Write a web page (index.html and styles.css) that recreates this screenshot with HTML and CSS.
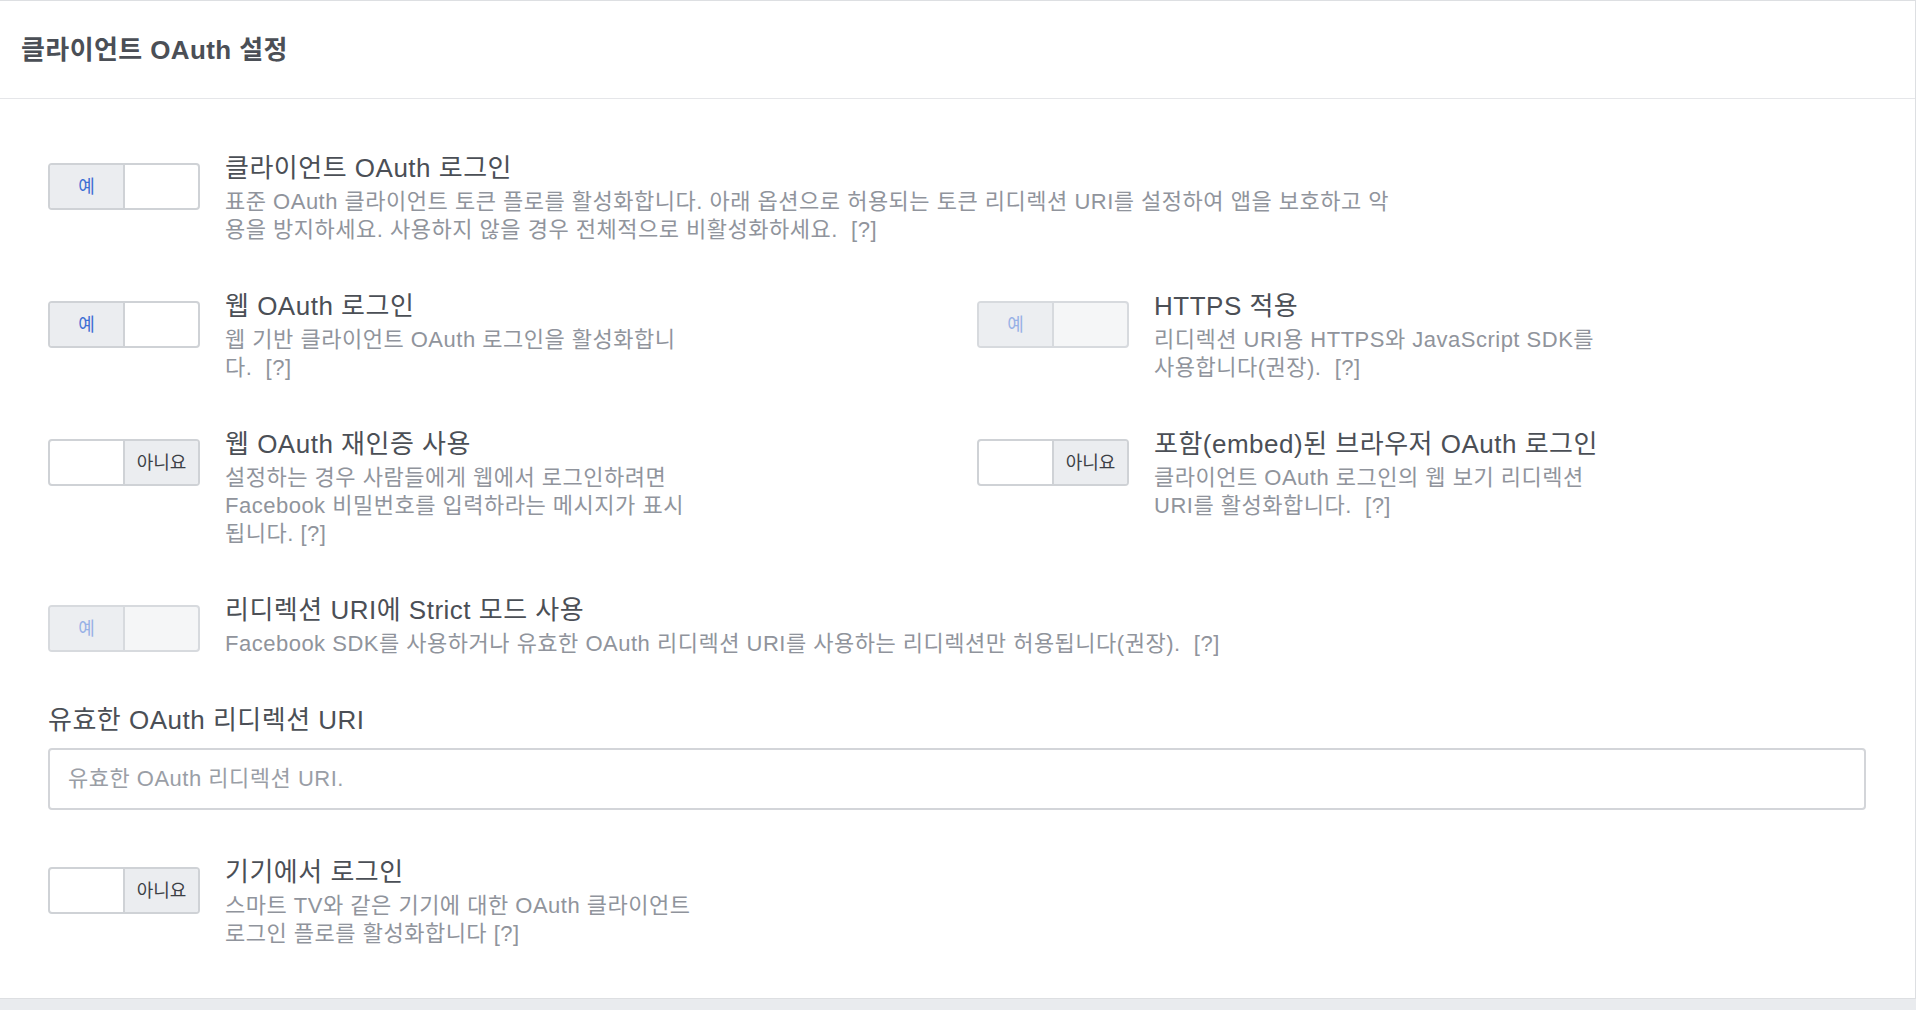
FILE: index.html
```html
<!DOCTYPE html>
<html lang="ko">
<head>
<meta charset="utf-8">
<title>클라이언트 OAuth 설정</title>
<link rel="stylesheet" href="styles.css">
</head>
<body>
<section class="card">
  <header class="card-header">
    <h2>클라이언트 OAuth 설정</h2>
  </header>
  <div class="card-body">
    <div class="setting">
      <div class="toggle">
        <span class="seg active yes">예</span><span class="seg"></span>
      </div>
      <div class="setting-text">
        <div class="setting-title">클라이언트 OAuth 로그인</div>
        <div class="setting-desc wide">표준 OAuth 클라이언트 토큰 플로를 활성화합니다. 아래 옵션으로 허용되는 토큰 리디렉션 URI를 설정하여 앱을 보호하고 악<br>용을 방지하세요. 사용하지 않을 경우 전체적으로 비활성화하세요.&nbsp; [?]</div>
      </div>
    </div>

    <div class="setting-grid">
      <div class="setting">
        <div class="toggle">
          <span class="seg active yes">예</span><span class="seg"></span>
        </div>
        <div class="setting-text">
          <div class="setting-title">웹 OAuth 로그인</div>
          <div class="setting-desc">웹 기반 클라이언트 OAuth 로그인을 활성화합니<br>다.&nbsp; [?]</div>
        </div>
      </div>
      <div class="setting">
        <div class="toggle disabled">
          <span class="seg active yes">예</span><span class="seg"></span>
        </div>
        <div class="setting-text">
          <div class="setting-title">HTTPS 적용</div>
          <div class="setting-desc">리디렉션 URI용 HTTPS와 JavaScript SDK를<br>사용합니다(권장).&nbsp; [?]</div>
        </div>
      </div>
      <div class="setting">
        <div class="toggle">
          <span class="seg"></span><span class="seg active no">아니요</span>
        </div>
        <div class="setting-text">
          <div class="setting-title">웹 OAuth 재인증 사용</div>
          <div class="setting-desc">설정하는 경우 사람들에게 웹에서 로그인하려면<br>Facebook 비밀번호를 입력하라는 메시지가 표시<br>됩니다. [?]</div>
        </div>
      </div>
      <div class="setting">
        <div class="toggle">
          <span class="seg"></span><span class="seg active no">아니요</span>
        </div>
        <div class="setting-text">
          <div class="setting-title">포함(embed)된 브라우저 OAuth 로그인</div>
          <div class="setting-desc">클라이언트 OAuth 로그인의 웹 보기 리디렉션<br>URI를 활성화합니다.&nbsp; [?]</div>
        </div>
      </div>
    </div>

    <div class="setting">
      <div class="toggle disabled">
        <span class="seg active yes">예</span><span class="seg"></span>
      </div>
      <div class="setting-text">
        <div class="setting-title">리디렉션 URI에 Strict 모드 사용</div>
        <div class="setting-desc wide">Facebook SDK를 사용하거나 유효한 OAuth 리디렉션 URI를 사용하는 리디렉션만 허용됩니다(권장).&nbsp; [?]</div>
      </div>
    </div>

    <div class="field">
      <label class="field-label" for="redirect">유효한 OAuth 리디렉션 URI</label>
      <input class="field-input" id="redirect" type="text" placeholder="유효한 OAuth 리디렉션 URI.">
    </div>

    <div class="setting">
      <div class="toggle">
        <span class="seg"></span><span class="seg active no">아니요</span>
      </div>
      <div class="setting-text">
        <div class="setting-title">기기에서 로그인</div>
        <div class="setting-desc">스마트 TV와 같은 기기에 대한 OAuth 클라이언트<br>로그인 플로를 활성화합니다 [?]</div>
      </div>
    </div>
  </div>
</section>
</body>
</html>
```
FILE: styles.css
```css
html, body {
  margin: 0;
  padding: 0;
}

body {
  background: #e9ebee;
  font-family: "Liberation Sans", "Noto Sans CJK KR", sans-serif;
  color: #4b4f56;
}

.card {
  background: #ffffff;
  border-top: 1px solid #dddfe2;
  border-right: 1px solid #dddfe2;
  border-bottom: 1px solid #dddfe2;
}

.card-header {
  padding: 34px 21px 33px;
  border-bottom: 1px solid #e5e6e9;
}

.card-header h2 {
  margin: 0;
  font-size: 26px;
  line-height: 30px;
  font-weight: 600;
  letter-spacing: 0.4px;
  color: #4b4f56;
}

.card-body {
  padding: 54px 49px 50px 48px;
  display: flex;
  flex-direction: column;
  gap: 47px;
}

.setting-grid {
  display: grid;
  grid-template-columns: 1fr 1fr;
  column-gap: 40px;
  row-gap: 47px;
}

.setting {
  display: flex;
  align-items: flex-start;
  gap: 25px;
}

.toggle {
  flex: none;
  display: flex;
  box-sizing: border-box;
  width: 152px;
  height: 47px;
  margin-top: 10px;
  border: 2px solid #cfd2d6;
  border-radius: 4px;
  overflow: hidden;
  background: #ffffff;
}

.seg {
  flex: 1;
  display: flex;
  align-items: center;
  justify-content: center;
  font-size: 18px;
  line-height: 1;
}

.seg + .seg {
  border-left: 2px solid #cfd2d6;
}

.seg.active {
  background: #ebedf0;
}

.seg.yes {
  color: #3f6fd4;
}

.seg.no {
  color: #3b3f45;
}

.toggle.disabled {
  border-color: #d7dade;
  background: #f5f6f7;
}

.toggle.disabled .seg + .seg {
  border-left-color: #d7dade;
}

.toggle.disabled .seg.active {
  background: #eceef1;
}

.toggle.disabled .seg.yes {
  color: #98b1e6;
}

.setting-text {
  min-width: 0;
}

.setting-title {
  font-size: 26px;
  line-height: 30px;
  letter-spacing: 0.5px;
  color: #4b4f56;
}

.setting-desc {
  margin-top: 5px;
  font-size: 22px;
  line-height: 28px;
  letter-spacing: 0.5px;
  color: #90949c;
  max-width: 560px;
}

.setting-desc.wide {
  max-width: 1400px;
}

.field {
  display: flex;
  flex-direction: column;
}

.field-label {
  font-size: 26px;
  line-height: 30px;
  letter-spacing: 0.5px;
  color: #4b4f56;
}

.field-input {
  margin-top: 13px;
  box-sizing: border-box;
  width: 100%;
  height: 62px;
  padding: 0 18px;
  border: 2px solid #d3d5d9;
  border-radius: 4px;
  font-family: inherit;
  font-size: 22px;
  letter-spacing: 0.5px;
  color: #1d2129;
  background: #ffffff;
  outline: none;
}

.field-input::placeholder {
  color: #9a9ea6;
}
```
